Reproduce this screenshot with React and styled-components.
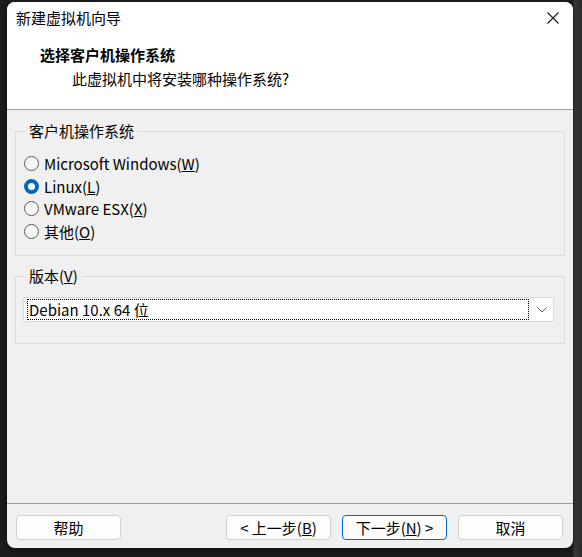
import React from 'react'
import styled, { createGlobalStyle } from 'styled-components'

const GlobalStyle = createGlobalStyle`
    html, body {
        margin: 0;
        padding: 0;
        background: #1c1c1c;
    }
    body {
        font-family: "Noto Sans CJK SC", "Noto Sans", sans-serif;
        font-size: 15px;
        color: #000000;
    }
`

const options = [
    { label: 'Microsoft Windows', key: 'W' },
    { label: 'Linux', key: 'L', checked: true },
    { label: 'VMware ESX', key: 'X' },
    { label: '其他', key: 'O' },
]

const CloseIcon = () => (
    <svg width="12" height="12" viewBox="0 0 12 12">
        <path d="M0.5 0.5 L11.5 11.5 M11.5 0.5 L0.5 11.5" stroke="#1a1a1a" strokeWidth="1.1" fill="none" />
    </svg>
)

const Chevron = () => (
    <svg width="10" height="6" viewBox="0 0 10 6">
        <path d="M0.5 0.5 L5 5 L9.5 0.5" stroke="#606060" strokeWidth="1" fill="none" />
    </svg>
)

const App = () => {
    return (
        <>
            <GlobalStyle />
            <StyledPage>
                <StyledWindow>
                    <StyledHeader>
                        <StyledTitleBar>
                            <StyledTitle>新建虚拟机向导</StyledTitle>
                            <StyledClose>
                                <CloseIcon />
                            </StyledClose>
                        </StyledTitleBar>
                        <StyledHeading>选择客户机操作系统</StyledHeading>
                        <StyledSubtitle>此虚拟机中将安装哪种操作系统?</StyledSubtitle>
                    </StyledHeader>
                    <StyledBody>
                        <StyledGroup $bottom={12}>
                            <StyledLegend>客户机操作系统</StyledLegend>
                            <StyledRadioList>
                                {options.map((item) => (
                                    <StyledRadioRow key={item.key}>
                                        <StyledRadio checked={item.checked} />
                                        <span>
                                            {item.label}(<u>{item.key}</u>)
                                        </span>
                                    </StyledRadioRow>
                                ))}
                            </StyledRadioList>
                        </StyledGroup>
                        <StyledGroup $bottom={21}>
                            <StyledLegend>
                                版本(<u>V</u>)
                            </StyledLegend>
                            <StyledSelect>
                                <StyledFocus>Debian 10.x 64 位</StyledFocus>
                                <StyledArrow>
                                    <Chevron />
                                </StyledArrow>
                            </StyledSelect>
                        </StyledGroup>
                    </StyledBody>
                    <StyledFooter>
                        <StyledButton>帮助</StyledButton>
                        <StyledSpacer />
                        <StyledButton>
                            &lt; 上一步(<u>B</u>)
                        </StyledButton>
                        <StyledButton $primary>
                            下一步(<u>N</u>) &gt;
                        </StyledButton>
                        <StyledButton>取消</StyledButton>
                    </StyledFooter>
                </StyledWindow>
            </StyledPage>
        </>
    )
}

export default App

const StyledPage = styled.div`
    width: 582px;
    height: 557px;
    padding: 2px 0 0 7px;
    box-sizing: border-box;
    background: linear-gradient(to right, #1c1c1c 0, #1c1c1c 573px, #3a3a3a 574px, #2a2a2a 582px);
`

const StyledWindow = styled.div`
    width: 566px;
    height: 546px;
    border-radius: 8px;
    overflow: hidden;
    background: #f0f0f0;
    display: flex;
    flex-direction: column;
    box-shadow: 0 2px 6px rgba(0, 0, 0, 0.5);
`

const StyledHeader = styled.div`
    background: #ffffff;
    height: 107px;
    border-bottom: 1px solid #a0a0a0;
`

const StyledTitleBar = styled.div`
    height: 32px;
    display: flex;
    align-items: center;
    justify-content: space-between;
    padding: 0 14px 0 9px;
`

const StyledTitle = styled.div`
    line-height: 20px;
`

const StyledClose = styled.div`
    display: flex;
    align-items: center;
`

const StyledHeading = styled.div`
    margin-top: 10px;
    padding-left: 33px;
    font-weight: 700;
    line-height: 22px;
`

const StyledSubtitle = styled.div`
    margin-top: 2px;
    padding-left: 65px;
    line-height: 22px;
`

const StyledBody = styled.div`
    flex: 1;
    padding: 11px 8px 0 8px;
    display: flex;
    flex-direction: column;
    gap: 10px;
`

const StyledGroup = styled.fieldset`
    margin: 0;
    border: 1px solid #dcdcdc;
    padding: 0 10px ${(p) => p.$bottom}px 7px;
`

const StyledLegend = styled.legend`
    margin-left: 3px;
    padding: 0 3px;
    line-height: 20px;
`

const StyledRadioList = styled.div`
    padding-top: 11px;
    display: flex;
    flex-direction: column;
`

const StyledRadioRow = styled.label`
    height: 22.8px;
    display: flex;
    align-items: center;
    gap: 5px;
    padding-left: 1px;
`

const StyledRadio = styled.span`
    width: 15px;
    height: 15px;
    box-sizing: border-box;
    border-radius: 50%;
    flex-shrink: 0;
    border: ${(p) => (p.checked ? '4px solid #0067c0' : '1px solid #5c5c5c')};
    background: ${(p) => (p.checked ? '#ffffff' : '#f7f7f7')};
`

const StyledSelect = styled.div`
    margin-top: 11px;
    height: 25px;
    box-sizing: border-box;
    background: #ffffff;
    border: 1px solid #d9d9d9;
    border-radius: 2px;
    display: flex;
    align-items: center;
    padding: 1px 0 1px 3px;
`

const StyledFocus = styled.div`
    flex: 1;
    height: 21px;
    line-height: 21px;
    box-sizing: border-box;
    outline: 1px dotted #000000;
    outline-offset: -1px;
    padding-left: 2px;
`

const StyledArrow = styled.div`
    width: 23px;
    display: flex;
    justify-content: center;
    align-items: center;
    padding-left: 1px;
`

const StyledFooter = styled.div`
    height: 45px;
    border-top: 1px solid #a0a0a0;
    display: flex;
    align-items: flex-start;
    gap: 11px;
    padding: 11px 10px 0 9px;
    box-sizing: border-box;
`

const StyledSpacer = styled.div`
    flex: 1;
`

const StyledButton = styled.button`
    width: 105px;
    height: 25px;
    box-sizing: border-box;
    font-family: inherit;
    font-size: 15px;
    color: #000000;
    background: #fdfdfd;
    border: 1px solid ${(p) => (p.$primary ? '#0067c0' : '#d0d0d0')};
    border-radius: 4px;
    padding: 0;
    line-height: 22px;
`
